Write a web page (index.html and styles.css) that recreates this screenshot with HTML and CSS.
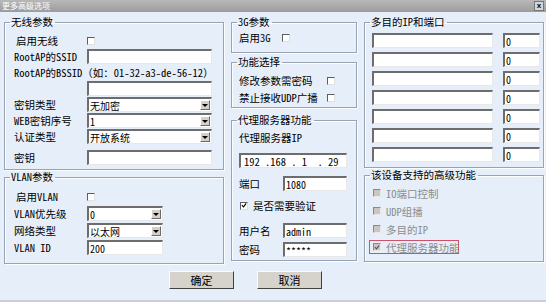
FILE: index.html
```html
<!doctype html>
<html>
<head>
  <meta charset="utf-8">
  <link rel="stylesheet" href="styles.css">
</head>
<body>
  <div class="dialog">
    <div class="titlebar">
      <span class="title">更多高级选项</span>
      <span class="close">x</span>
    </div>
    <div class="panes">
      <div class="col">
        <fieldset class="fs fs-wifi">
          <legend>无线参数</legend>
          <div class="inner wifi-rows">
            <div class="row"><span class="lbl w73 indent">启用无线</span><span class="cb"></span></div>
            <div class="row"><span class="lbl w73">RootAP的SSID</span><span class="inp w125"></span></div>
            <div class="row"><span class="lbl">RootAP的BSSID（如：01-32-a3-de-56-12）</span></div>
            <div class="row"><span class="lbl w73"></span><span class="inp w125"></span></div>
            <div class="row"><span class="lbl w73">密钥类型</span><span class="sel w125"><span class="val">无加密</span><span class="arrow"></span></span></div>
            <div class="row"><span class="lbl w73">WEB密钥序号</span><span class="sel w125"><span class="val">1</span><span class="arrow"></span></span></div>
            <div class="row"><span class="lbl w73">认证类型</span><span class="sel w125"><span class="val">开放系统</span><span class="arrow"></span></span></div>
            <div class="row row-last"><span class="lbl w73">密钥</span><span class="inp w125"></span></div>
          </div>
        </fieldset>
        <fieldset class="fs fs-vlan">
          <legend>VLAN参数</legend>
          <div class="inner vlan-rows">
            <div class="row"><span class="lbl w73 indent">启用VLAN</span><span class="cb"></span></div>
            <div class="row"><span class="lbl w73">VLAN优先级</span><span class="sel w76"><span class="val">0</span><span class="arrow"></span></span></div>
            <div class="row"><span class="lbl w73">网络类型</span><span class="sel w76"><span class="val">以太网</span><span class="arrow"></span></span></div>
            <div class="row"><span class="lbl w73">VLAN ID</span><span class="inp w76">200</span></div>
          </div>
        </fieldset>
      </div>

      <div class="col">
        <fieldset class="fs fs-3g">
          <legend>3G参数</legend>
          <div class="inner mid-inner">
            <div class="row"><span class="lbl w43">启用3G</span><span class="cb"></span></div>
          </div>
        </fieldset>
        <fieldset class="fs fs-func">
          <legend>功能选择</legend>
          <div class="inner mid-inner func-rows">
            <div class="row"><span class="lbl w88">修改参数需密码</span><span class="cb"></span></div>
            <div class="row"><span class="lbl w88">禁止接收UDP广播</span><span class="cb"></span></div>
          </div>
        </fieldset>
        <fieldset class="fs fs-proxy">
          <legend>代理服务器功能</legend>
          <div class="inner mid-inner proxy-rows">
            <div class="row"><span class="lbl">代理服务器IP</span></div>
            <div class="row ip-row"><span class="inp w108 ip">192 .168 . 1  . 29</span></div>
            <div class="row port-row"><span class="lbl w44">端口</span><span class="inp w64">1080</span></div>
            <div class="row auth-row"><span class="cb checked"><svg viewBox="0 0 7 7" width="7" height="7"><polyline points="1,3 3,5 6,1" fill="none" stroke="#000" stroke-width="1.3"/></svg></span><span class="lbl">是否需要验证</span></div>
            <div class="row user-row"><span class="lbl w44">用户名</span><span class="inp w64">admin</span></div>
            <div class="row"><span class="lbl w44">密码</span><span class="inp w64">*****</span></div>
          </div>
        </fieldset>
      </div>

      <div class="col">
        <fieldset class="fs fs-multi">
          <legend>多目的IP和端口</legend>
          <div class="inner multi-rows">
            <div class="row"><span class="inp w121"></span><span class="inp w37">0</span></div>
            <div class="row"><span class="inp w121"></span><span class="inp w37">0</span></div>
            <div class="row"><span class="inp w121"></span><span class="inp w37">0</span></div>
            <div class="row"><span class="inp w121"></span><span class="inp w37">0</span></div>
            <div class="row"><span class="inp w121"></span><span class="inp w37">0</span></div>
            <div class="row"><span class="inp w121"></span><span class="inp w37">0</span></div>
            <div class="row"><span class="inp w121"></span><span class="inp w37">0</span></div>
          </div>
        </fieldset>
        <fieldset class="fs fs-adv">
          <legend>该设备支持的高级功能</legend>
          <div class="inner adv-rows">
            <div class="adv"><span class="cb off"></span><span class="lbl">IO端口控制</span></div>
            <div class="adv"><span class="cb off"></span><span class="lbl">UDP组播</span></div>
            <div class="adv"><span class="cb off"></span><span class="lbl">多目的IP</span></div>
            <div class="adv focus"><span class="cb off checked"><svg viewBox="0 0 7 7" width="7" height="7"><polyline points="1,3 3,5 6,1" fill="none" stroke="#555" stroke-width="1.3"/></svg></span><span class="lbl">代理服务器功能</span></div>
          </div>
        </fieldset>
      </div>
    </div>
    <div class="buttons">
      <span class="btn">确定</span>
      <span class="btn">取消</span>
    </div>
  </div>
</body>
</html>
```

FILE: styles.css
```css
body {
  margin: 0;
  background: #e6eef9;
  font-family: "Noto Sans Mono CJK SC", "Noto Sans CJK SC", monospace;
  font-size: 10.5px;
  color: #000;
}
.dialog {
  width: 546px;
  height: 302px;
  box-sizing: border-box;
  border-bottom: 2px solid #c9ced6;
}
.titlebar {
  height: 12px;
  background: linear-gradient(#b8b8b8, #9c9c9c);
  display: flex;
  align-items: center;
  justify-content: space-between;
  padding: 0 2px;
}
.title {
  color: #fff;
  font-size: 8px;
  line-height: 10px;
}
.close {
  width: 8px;
  height: 8px;
  background: #d6d6d6;
  border: 1px solid #777;
  font: bold 8px/7px "Liberation Sans", sans-serif;
  text-align: center;
  color: #000;
}
.panes {
  display: grid;
  grid-template-columns: 220px 126px 180px;
  column-gap: 7px;
  padding: 3px 0 0 4px;
}
.col {
  display: flex;
  flex-direction: column;
}
.fs {
  margin: 0;
  padding: 0;
  min-width: 0;
  box-sizing: border-box;
  border: 1px solid #98a4b3;
  box-shadow: 1px 1px 0 #fbfdff, inset 1px 1px 0 #fbfdff;
}
.fs legend {
  margin-left: 5px;
  padding: 0 2px 0 1px;
  line-height: 14px;
  font-size: 10.5px;
}
.inner {
  display: flex;
  flex-direction: column;
}
.row {
  display: flex;
  align-items: center;
  height: 15px;
}
.lbl {
  white-space: pre;
  line-height: 15px;
  flex: none;
}
.indent { padding-left: 2px; box-sizing: border-box; }
.w73 { width: 73px; }
.w43 { width: 43px; }
.w44 { width: 44px; }
.w88 { width: 88px; }

.inp, .sel {
  display: flex;
  align-items: center;
  height: 15px;
  box-sizing: border-box;
  background: #fff;
  border: 1px solid;
  border-width: 2px 1px 1px 2px;
  border-color: #6d6d6d #e8e8e8 #e8e8e8 #6d6d6d;
  padding-left: 1px;
  font-size: 10px;
  white-space: pre;
  flex: none;
}
.sel {
  justify-content: space-between;
  padding-right: 1px;
}
.arrow {
  width: 10px;
  height: 10px;
  background: #d4d0c8;
  border: 1px solid;
  border-color: #fff #6a6a6a #6a6a6a #fff;
  box-sizing: border-box;
  position: relative;
}
.arrow::after {
  content: "";
  position: absolute;
  left: 1px;
  top: 3px;
  border: 3px solid transparent;
  border-top: 3px solid #000;
  border-bottom: 0;
}
.w125 { width: 125px; }
.w76 { width: 76px; }
.w108 { width: 108px; }
.w64 { width: 64px; }
.w121 { width: 121px; }
.w37 { width: 37px; }

.cb {
  width: 8px;
  height: 8px;
  box-sizing: border-box;
  background: #fff;
  border: 1px solid;
  border-color: #5e5e5e #e0e0e0 #e0e0e0 #5e5e5e;
  display: flex;
  align-items: center;
  justify-content: center;
  flex: none;
}
.cb svg { display: block; }
.cb.off {
  background: #c9c6bf;
  border-color: #8a8a8a #e8e8e8 #e8e8e8 #8a8a8a;
}

/* left column */
.fs-wifi { height: 155px; }
.fs-vlan { height: 94px; }
.wifi-rows {
  padding: 4px 0 0 9px;
  gap: 1px;
}
.row-last { margin-top: 5px; }
.vlan-rows {
  padding: 5px 0 0 9px;
  gap: 2px;
}

/* middle column */
.mid-inner { padding-left: 7px; }
.fs-3g { height: 38px; }
.fs-3g .inner { padding-top: 1px; }
.fs-func { height: 53px; margin-top: 2px; }
.func-rows { padding-top: 4px; gap: 2px; }
.fs-proxy { height: 148px; margin-top: 5px; }
.proxy-rows { padding-top: 3px; }
.ip-row { margin-top: 8px; }
.ip { font-size: 10.5px; padding-left: 3px; }
.port-row { margin-top: 8px; }
.auth-row { margin-top: 7px; gap: 5px; padding-left: 1px; }
.user-row { margin-top: 10px; }
.proxy-rows .row + .row:last-child { margin-top: 4px; }

/* right column */
.fs-multi { height: 153px; }
.multi-rows {
  padding: 4px 0 0 7px;
  gap: 4px;
}
.multi-rows .row { gap: 10px; }
.fs-adv { height: 94px; margin-top: 0; }
.adv-rows {
  padding: 4px 0 0 4px;
  gap: 4px;
}
.adv {
  display: flex;
  align-items: center;
  gap: 5px;
  width: 90px;
  height: 14px;
  box-sizing: border-box;
  padding-left: 4px;
  color: #8c8c8c;
}
.adv.focus { border: 1px solid #d0506a; padding-left: 3px; }

.buttons {
  display: flex;
  gap: 23px;
  padding: 7px 0 0 169px;
}
.btn {
  width: 65px;
  height: 18px;
  box-sizing: border-box;
  background: #d6d3cc;
  border: 1px solid;
  border-color: #fbfbfb #404040 #404040 #fbfbfb;
  display: flex;
  align-items: center;
  justify-content: center;
  font-size: 11px;
}
```
